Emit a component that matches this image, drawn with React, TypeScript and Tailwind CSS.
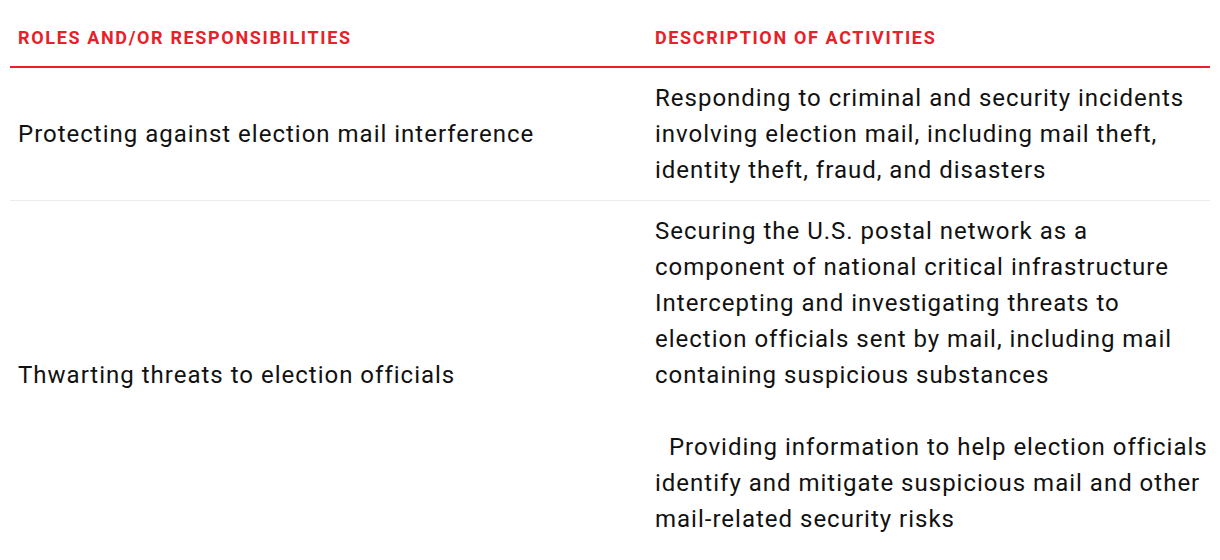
import React from "react";

export default function App() {
  const font = { fontFamily: "Roboto, 'Liberation Sans', sans-serif" };
  return (
    <div className="w-[1220px] h-[560px] bg-white overflow-hidden" style={font}>
      <table className="ml-[10px] w-[1200px] border-collapse table-fixed">
        <colgroup>
          <col className="w-[637px]" />
          <col className="w-[563px]" />
        </colgroup>
        <thead>
          <tr className="border-b-2 border-[#e8202a]">
            <th className="text-left align-top pl-[8px] pt-[26px] pb-[16px] leading-[24px] text-[18px] font-bold tracking-[1.65px] text-[#e8202a]">
              ROLES AND/OR RESPONSIBILITIES
            </th>
            <th className="text-left align-top pl-[8px] pt-[26px] pb-[16px] leading-[24px] text-[18px] font-bold tracking-[1.65px] text-[#e8202a]">
              DESCRIPTION OF ACTIVITIES
            </th>
          </tr>
        </thead>
        <tbody className="text-[24px] leading-[36px] tracking-[1px] text-[#111]">
          <tr className="border-b border-[#ececec]">
            <td className="align-middle pl-[8px] py-[12px]">Protecting against election mail interference</td>
            <td className="align-middle pl-[8px] py-[12px] whitespace-nowrap">
              Responding to criminal and security incidents
              <br />
              involving election mail, including mail theft,
              <br />
              identity theft, fraud, and disasters
            </td>
          </tr>
          <tr>
            <td className="align-middle pl-[8px] py-[12px]">Thwarting threats to election officials</td>
            <td className="align-middle pl-[8px] py-[12px] whitespace-nowrap">
              Securing the U.S. postal network as a
              <br />
              component of national critical infrastructure
              <br />
              Intercepting and investigating threats to
              <br />
              election officials sent by mail, including mail
              <br />
              containing suspicious substances
              <br />
              <br />
              {"\u00a0\u00a0Providing information to help election officials"}
              <br />
              identify and mitigate suspicious mail and other
              <br />
              mail-related security risks
            </td>
          </tr>
        </tbody>
      </table>
    </div>
  );
}
